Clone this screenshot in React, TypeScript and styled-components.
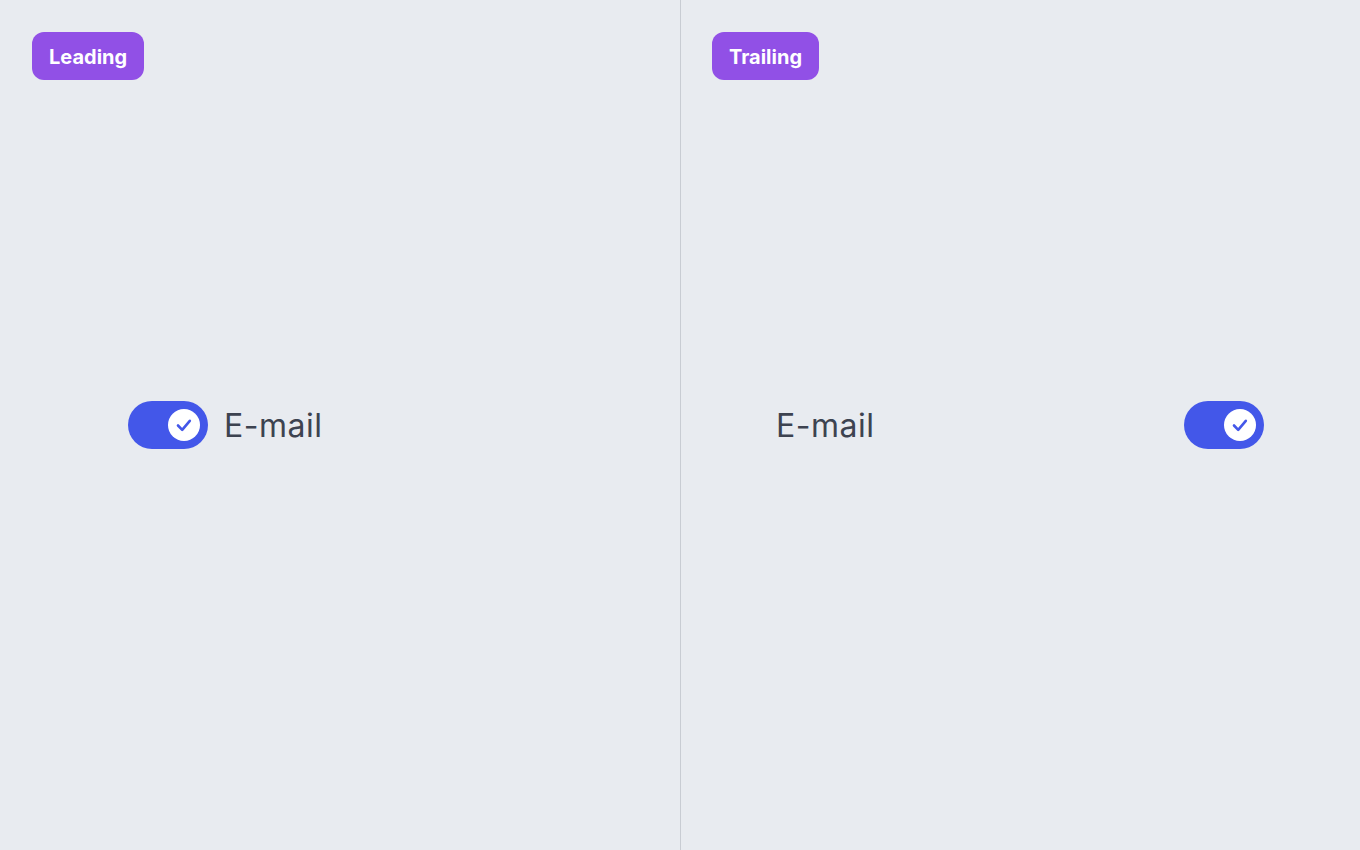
import React from 'react';
import styled, { createGlobalStyle } from 'styled-components';

const GlobalStyle = createGlobalStyle`
  html, body {
    margin: 0;
    padding: 0;
    background: #e8ebf0;
    font-family: Inter, "Noto Sans", sans-serif;
  }
`;

const Page = styled.div`
  display: grid;
  grid-template-columns: 680px 1fr;
  width: 1360px;
  height: 850px;
  background: #e8ebf0;
`;

const Panel = styled.section<{ $divided?: boolean }>`
  position: relative;
  display: flex;
  align-items: center;
  padding: 0 128px;
  box-shadow: ${(p) => (p.$divided ? 'inset 1px 0 0 #c8ccd3' : 'none')};
`;

const Tag = styled.span`
  position: absolute;
  top: 32px;
  left: 32px;
  height: 48px;
  padding: 1px 17px 0;
  box-sizing: border-box;
  display: flex;
  align-items: center;
  border-radius: 12px;
  background: #9150e6;
  color: #fff;
  font-size: 20px;
  font-weight: 700;
`;

const Row = styled.label<{ $trailing?: boolean }>`
  display: flex;
  align-items: center;
  gap: 16px;
  width: ${(p) => (p.$trailing ? '488px' : 'auto')};
  margin-left: ${(p) => (p.$trailing ? '-32px' : '0')};
  justify-content: ${(p) => (p.$trailing ? 'space-between' : 'flex-start')};
`;

const Track = styled.span`
  width: 80px;
  height: 48px;
  border-radius: 24px;
  background: #4357e9;
  display: flex;
  align-items: center;
  justify-content: flex-end;
  padding: 0 8px;
  box-sizing: border-box;
  flex-shrink: 0;
`;

const Knob = styled.span`
  width: 32px;
  height: 32px;
  border-radius: 50%;
  background: #fff;
  display: flex;
`;

const Label = styled.span`
  font-size: 32px;
  letter-spacing: 0.5px;
  color: #3d4350;
  line-height: 1;
  padding-top: 2px;
`;

const Switch = () => (
  <Track>
    <Knob>
      <svg width="32" height="32" viewBox="0 0 32 32" fill="none">
        <path d="M10 16.5l4.2 4.3 7.6-9" stroke="#4357e9" strokeWidth="2.6" strokeLinecap="round" strokeLinejoin="round" />
      </svg>
    </Knob>
  </Track>
);

export default function App() {
  return (
    <Page>
      <GlobalStyle />
      <Panel>
        <Tag>Leading</Tag>
        <Row>
          <Switch />
          <Label>E-mail</Label>
        </Row>
      </Panel>
      <Panel $divided>
        <Tag>Trailing</Tag>
        <Row $trailing>
          <Label>E-mail</Label>
          <Switch />
        </Row>
      </Panel>
    </Page>
  );
}
